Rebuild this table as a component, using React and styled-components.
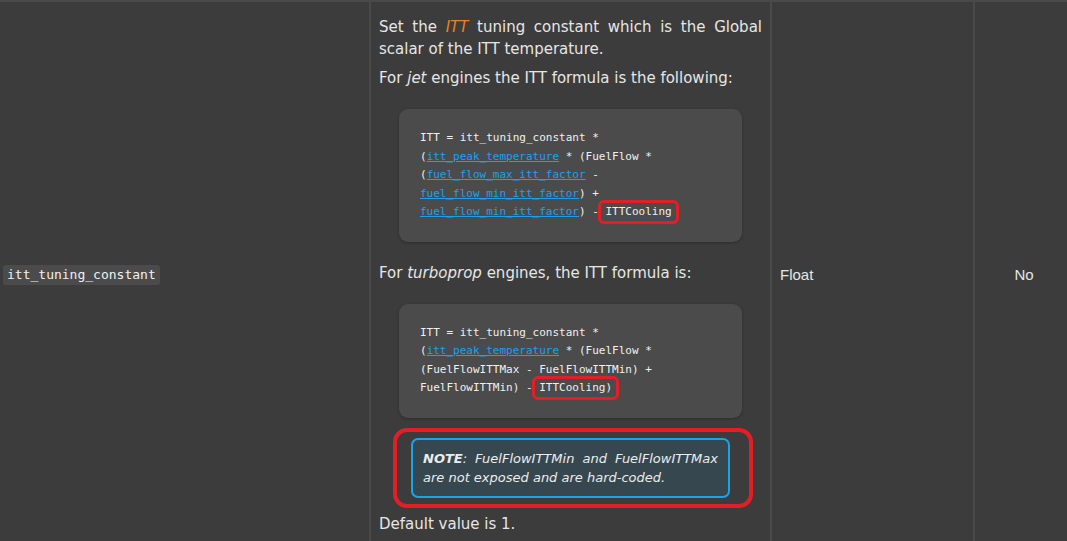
import React from 'react';
import styled, { createGlobalStyle } from 'styled-components';

const GlobalStyle = createGlobalStyle`
  html, body {
    margin: 0;
    padding: 0;
    background: #3c3c3c;
    overflow: hidden;
  }
`;

const Table = styled.div`
  display: grid;
  grid-template-columns: 371px 401px 203px 1fr;
  border-top: 2px solid #4a4a4a;
  background: #3c3c3c;
  color: #e6e6e6;
  font-family: 'DejaVu Sans', Verdana, sans-serif;
`;

const Cell = styled.div`
  display: flex;
  align-items: center;
  justify-content: ${(p) => (p.center ? 'center' : 'flex-start')};
  padding: ${(p) => p.pad || '0 8px'};
  border-right: ${(p) => (p.last ? 'none' : '2px solid #4a4a4a')};
  font-family: ${(p) => (p.sans ? "'Liberation Sans', Arial, sans-serif" : 'inherit')};
  font-size: 15px;
`;

const Description = styled.div`
  padding: 14px 8px 6px 8px;
  border-right: 2px solid #4a4a4a;
  font-size: 15px;
  line-height: 22px;
`;

const Para = styled.p`
  margin: 0 0 7px;
  text-align: justify;
`;

const Accent = styled.em`
  color: #e8831f;
`;

const CodeBlock = styled.pre`
  margin: 20px;
  padding: 20px 21px;
  background: #4b4b4b;
  border-radius: 9px;
  box-shadow: 0 1px 3px rgba(0, 0, 0, 0.25);
  font-family: 'DejaVu Sans Mono', Consolas, monospace;
  font-size: 11px;
  line-height: 18.5px;
  color: #f0f0f0;
  white-space: pre;
`;

const Link = styled.a`
  color: #1ea0ec;
  text-decoration: underline;
`;

const Marked = styled.span`
  position: relative;

  &::after {
    content: '';
    position: absolute;
    left: -7px;
    right: -7px;
    top: -5px;
    bottom: -6px;
    border: 3px solid #e41e26;
    border-radius: 6px;
  }
`;

const NoteWrap = styled.div`
  position: relative;
  margin: 20px 32px 15px;

  &::after {
    content: '';
    position: absolute;
    left: -18px;
    right: -23px;
    top: -10px;
    bottom: -10px;
    border: 4px solid #e41e26;
    border-radius: 14px;
  }
`;

const Note = styled.div`
  padding: 9px 10px;
  border: 2px solid #19a3e8;
  border-radius: 7px;
  background: #37474f;
  font-size: 13px;
  line-height: 19px;
  font-style: italic;
  text-align: justify;
  color: #ececec;
`;

const InlineCode = styled.code`
  padding: 1px 4px;
  border-radius: 3px;
  background: #4b4b4b;
  font-family: 'DejaVu Sans Mono', Consolas, monospace;
  font-size: 13px;
  line-height: 18px;
  color: #f0f0f0;
`;

const App = () => (
  <>
    <GlobalStyle />
    <Table>
      <Cell pad="0 3px">
        <InlineCode>itt_tuning_constant</InlineCode>
      </Cell>
      <Description>
        <Para>
          Set the <Accent>ITT</Accent> tuning constant which is the Global scalar of the ITT temperature.
        </Para>
        <Para>
          For <em>jet</em> engines the ITT formula is the following:
        </Para>
        <CodeBlock>
          {'ITT = itt_tuning_constant *\n('}
          <Link>itt_peak_temperature</Link>
          {' * (FuelFlow *\n('}
          <Link>fuel_flow_max_itt_factor</Link>
          {' -\n'}
          <Link>fuel_flow_min_itt_factor</Link>
          {') +\n'}
          <Link>fuel_flow_min_itt_factor</Link>
          {') - '}
          <Marked>ITTCooling</Marked>
        </CodeBlock>
        <Para>
          For <em>turboprop</em> engines, the ITT formula is:
        </Para>
        <CodeBlock>
          {'ITT = itt_tuning_constant *\n('}
          <Link>itt_peak_temperature</Link>
          {' * (FuelFlow *\n(FuelFlowITTMax - FuelFlowITTMin) +\nFuelFlowITTMin) - '}
          <Marked>ITTCooling)</Marked>
        </CodeBlock>
        <NoteWrap>
          <Note>
            <strong>NOTE</strong>: FuelFlowITTMin and FuelFlowITTMax are not exposed and are hard-coded.
          </Note>
        </NoteWrap>
        <Para>Default value is 1.</Para>
      </Description>
      <Cell sans>Float</Cell>
      <Cell sans center last pad="0 2px 0 8px">
        No
      </Cell>
    </Table>
  </>
);

export default App;
